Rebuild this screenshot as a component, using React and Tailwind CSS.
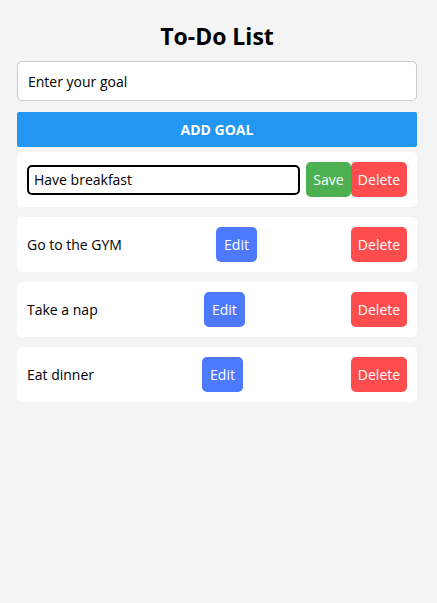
import React, { useState } from "react";

export default function App() {
  const [goal, setGoal] = useState("");
  const [items, setItems] = useState([
    { id: 1, text: "Have breakfast", editing: true },
    { id: 2, text: "Go to the GYM", editing: false },
    { id: 3, text: "Take a nap", editing: false },
    { id: 4, text: "Eat dinner", editing: false },
  ]);

  const addGoal = () => {
    if (!goal.trim()) return;
    setItems([...items, { id: Date.now(), text: goal, editing: false }]);
    setGoal("");
  };

  const update = (id, patch) =>
    setItems(items.map((it) => (it.id === id ? { ...it, ...patch } : it)));

  const remove = (id) => setItems(items.filter((it) => it.id !== id));

  return (
    <main
      className="min-h-screen bg-[#f4f4f4] pl-[17px] pr-[20px] pt-[20px]"
      style={{ fontFamily: '"Open Sans", "Noto Sans", sans-serif' }}
    >
      <h1 className="text-center text-[23px] font-bold leading-[32px] text-black mb-[9px]">
        To-Do List
      </h1>

      <input
        value={goal}
        onChange={(e) => setGoal(e.target.value)}
        placeholder="Enter your goal"
        className="block w-full h-[40px] px-[10px] bg-white border border-[#cccccc] rounded-[5px] text-[14px] text-black placeholder:text-black outline-none"
      />

      <button
        onClick={addGoal}
        className="mt-[11px] w-full h-[35px] bg-[#2196f3] text-white text-[14px] font-bold rounded-[2px]"
      >
        ADD GOAL
      </button>

      <ul className="mt-[5px] flex flex-col gap-[10px]">
        {items.map((it) => (
          <li
            key={it.id}
            className="flex items-center justify-between bg-white rounded-[5px] p-[10px] h-[55px]"
          >
            {it.editing ? (
              <>
                <input
                  value={it.text}
                  onChange={(e) => update(it.id, { text: e.target.value })}
                  className="flex-1 mr-[6px] h-[30px] px-[5px] border-2 border-black rounded-[5px] text-[14px] text-black outline-none"
                />
                <button
                  onClick={() => update(it.id, { editing: false })}
                  className="h-[35px] w-[45px] bg-[#4caf50] text-white text-[14px] rounded-[5px]"
                >
                  Save
                </button>
              </>
            ) : (
              <>
                <span className="text-[14px] text-black">{it.text}</span>
                <button
                  onClick={() => update(it.id, { editing: true })}
                  className="h-[35px] px-[8px] bg-[#4d79ff] text-white text-[14px] rounded-[5px]"
                >
                  Edit
                </button>
              </>
            )}
            <button
              onClick={() => remove(it.id)}
              className="h-[35px] w-[56px] bg-[#ff4d4d] text-white text-[14px] rounded-[5px]"
            >
              Delete
            </button>
          </li>
        ))}
      </ul>
    </main>
  );
}
